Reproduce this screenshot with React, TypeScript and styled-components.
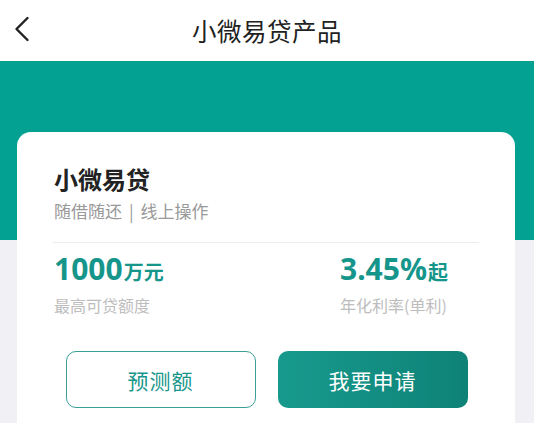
import styled, { createGlobalStyle } from "styled-components";

const GlobalStyle = createGlobalStyle`
  html, body {
    margin: 0;
    padding: 0;
    background: #f1f1f5;
    font-family: "Noto Sans CJK SC", "Noto Sans", sans-serif;
  }
  * { box-sizing: border-box; }
`;

const stats = [
  { value: "1000", unit: "万元", label: "最高可贷额度" },
  { value: "3.45%", unit: "起", label: "年化利率(单利)" },
];

const App = () => {
  return (
    <>
      <GlobalStyle />
      <Page>
        <Header>
          <BackButton aria-label="back">
            <svg width="16" height="26" viewBox="0 0 16 26" fill="none">
              <path
                d="M13.5 2 L2.5 13 L13.5 24"
                stroke="#222"
                strokeWidth="2.4"
                strokeLinecap="round"
                strokeLinejoin="round"
              />
            </svg>
          </BackButton>
          <HeaderTitle>小微易贷产品</HeaderTitle>
        </Header>
        <Body>
          <Card>
            <CardTitle>小微易贷</CardTitle>
            <CardSub>
              随借随还<Sep>|</Sep>线上操作
            </CardSub>
            <Divider />
            <StatsRow>
              {stats.map((s) => (
                <Stat key={s.label}>
                  <StatValue>
                    {s.value}
                    <StatUnit>{s.unit}</StatUnit>
                  </StatValue>
                  <StatLabel>{s.label}</StatLabel>
                </Stat>
              ))}
            </StatsRow>
            <Actions>
              <ActionButton $primary={false}>预测额</ActionButton>
              <ActionButton $primary>我要申请</ActionButton>
            </Actions>
          </Card>
        </Body>
      </Page>
    </>
  );
};

const Page = styled.div`
  width: 534px;
  height: 423px;
  overflow: hidden;
  background: #f1f1f5;
`;

const Header = styled.header`
  position: relative;
  height: 61px;
  background: #fff;
  display: flex;
  align-items: center;
  justify-content: center;
`;

const BackButton = styled.button`
  position: absolute;
  left: 14px;
  top: 16px;
  border: none;
  background: none;
  padding: 0;
  display: flex;
`;

const HeaderTitle = styled.h1`
  margin: 0;
  font-size: 24.5px;
  font-weight: 400;
  color: #222;
  letter-spacing: 0.5px;
`;

const Body = styled.main`
  background: linear-gradient(#02a192 0, #02a192 179px, #f1f1f5 179px);
  padding: 71px 19px 0 17px;
`;

const Card = styled.section`
  background: #fff;
  border-radius: 14px;
  padding: 31px 36px 40px 37px;
  height: 330px;
`;

const CardTitle = styled.h2`
  margin: 0;
  font-size: 24px;
  line-height: 32px;
  font-weight: 700;
  color: #222;
`;

const CardSub = styled.div`
  margin-top: 5px;
  font-size: 17px;
  line-height: 22px;
  color: #999;
`;

const Sep = styled.span`
  margin: 0 7px;
`;

const Divider = styled.div`
  height: 1px;
  background: #ececec;
  margin-top: 20px;
  margin-left: -1px;
`;

const StatsRow = styled.div`
  display: grid;
  grid-template-columns: 286px 1fr;
  margin-top: 8px;
`;

const Stat = styled.div`
  display: flex;
  flex-direction: column;
`;

const StatValue = styled.div`
  font-family: "Noto Sans", "Noto Sans CJK SC", sans-serif;
  font-size: 30px;
  line-height: 36px;
  font-weight: 700;
  color: #16968b;
`;

const StatUnit = styled.span`
  font-family: "Noto Sans CJK SC", sans-serif;
  font-size: 20px;
  margin-left: 1px;
`;

const StatLabel = styled.div`
  margin-top: 5px;
  font-size: 16px;
  line-height: 20px;
  color: #bdbdbd;
`;

const Actions = styled.div`
  display: grid;
  grid-template-columns: 190px 190px;
  justify-content: center;
  gap: 22px;
  margin-top: 36px;
`;

const ActionButton = styled.button<{ $primary: boolean }>`
  height: 57px;
  border-radius: 10px;
  font-family: "Noto Sans CJK SC", sans-serif;
  font-size: 21px;
  font-weight: 400;
  border: ${(p) => (p.$primary ? "none" : "1.5px solid #3a9f95")};
  background: ${(p) =>
    p.$primary ? "linear-gradient(90deg, #179a8d, #0f8277)" : "#fff"};
  color: ${(p) => (p.$primary ? "#fff" : "#16968b")};
  letter-spacing: 1px;
`;

export default App;
